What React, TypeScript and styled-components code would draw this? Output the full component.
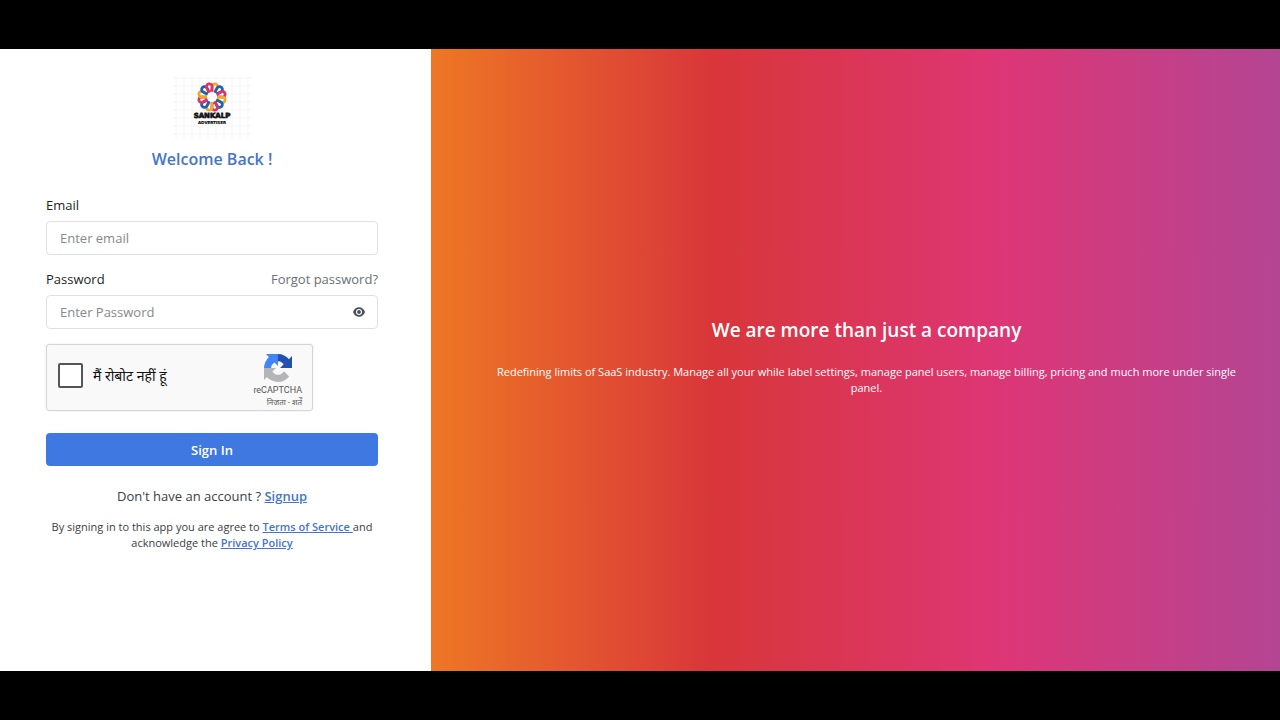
import React from "react";
import styled, { createGlobalStyle } from "styled-components";

const GlobalStyle = createGlobalStyle`
  *, *::before, *::after { box-sizing: border-box; }
  body { margin: 0; background: #000; }
  body, input, button { font-family: "Open Sans", "Noto Sans", sans-serif; }
`;

const Page = styled.div`
  min-height: 100vh;
  padding: 49px 0;
  display: flex;
  background: #000;
`;

const Split = styled.main`
  flex: 1;
  display: grid;
  grid-template-columns: 431fr 849fr;
`;

const FormPanel = styled.section`
  background: #fff;
  padding: 28px 53px 28px 46px;
`;

const Form = styled.form`
  display: flex;
  flex-direction: column;
`;

const Logo = styled.svg`
  display: block;
  align-self: center;
`;

const Heading = styled.h1`
  margin: 8px 0 24px;
  font-size: 16px;
  line-height: 24px;
  font-weight: 600;
  text-align: center;
  color: #4474cc;
`;

const LabelRow = styled.div`
  display: flex;
  justify-content: space-between;
  font-size: 13px;
  line-height: 20px;
  margin-bottom: 6px;
`;

const Label = styled.label`
  color: #1c1f24;
  font-weight: 500;
`;

const MutedLink = styled.a`
  color: #6c6f74;
  text-decoration: none;
`;

const Field = styled.div`
  display: flex;
  align-items: center;
  height: 34px;
  margin-bottom: 14px;
  padding-right: 12px;
  border: 1px solid #dfe1e4;
  border-radius: 4px;
`;

const Input = styled.input`
  flex: 1;
  min-width: 0;
  height: 100%;
  padding: 0 13px;
  border: 0;
  outline: 0;
  background: transparent;
  font-size: 13px;
  color: #212529;
  &::placeholder { color: #85888e; opacity: 1; }
`;

const IconButton = styled.button`
  display: flex;
  padding: 0;
  border: 0;
  background: none;
  color: #495057;
`;

const Captcha = styled.div`
  display: flex;
  align-items: flex-start;
  justify-content: space-between;
  width: 267px;
  height: 67px;
  margin: 1px 0 22px;
  padding: 9px 10px 0 11px;
  background: #f9f9f9;
  border: 1px solid #d6d6d6;
  border-radius: 3px;
  box-shadow: 0 0 3px rgba(0, 0, 0, 0.08);
`;

const CaptchaLabel = styled.label`
  display: flex;
  align-items: center;
  gap: 10px;
  height: 43px;
  font-size: 14px;
  color: #111;
`;

const Checkbox = styled.input`
  appearance: none;
  width: 25px;
  height: 25px;
  margin: 0;
  border: 2px solid #555;
  border-radius: 2px;
  background: #fff;
`;

const CaptchaBrand = styled.div`
  display: flex;
  flex-direction: column;
  align-items: center;
  gap: 2px;
  font-family: Roboto, "Noto Sans", sans-serif;
  font-size: 9px;
  line-height: 12px;
  color: #555;
`;

const CaptchaTerms = styled.div`
  align-self: flex-end;
  font-size: 8px;
  line-height: 9px;
  a { color: inherit; text-decoration: none; }
`;

const SubmitButton = styled.button`
  height: 33px;
  padding: 0;
  border: 0;
  border-radius: 4px;
  background: #3f78e0;
  color: #fff;
  font-size: 13px;
  font-weight: 600;
`;

const Note = styled.p<{ $small?: boolean }>`
  margin: ${(p) => (p.$small ? "13px 0 0" : "20px 0 0")};
  font-size: ${(p) => (p.$small ? "11px" : "13px")};
  line-height: ${(p) => (p.$small ? "16px" : "20px")};
  text-align: center;
  color: #3a3d42;
`;

const TextLink = styled.a`
  color: #4474cc;
  font-weight: 600;
  text-decoration: underline;
`;

const PromoPanel = styled.section`
  display: flex;
  flex-direction: column;
  justify-content: center;
  padding: 0 36px 8px 58px;
  text-align: center;
  color: #fff;
  background: linear-gradient(to right, #ee7724, #d8363a, #dd3675, #b44593);
`;

const PromoTitle = styled.h2`
  margin: 0 0 21px;
  font-size: 19px;
  line-height: 26px;
  font-weight: 600;
`;

const PromoText = styled.p`
  margin: 0;
  font-size: 11px;
  line-height: 16px;
  font-weight: 500;
`;

const petalColors = ["#f4a62a", "#1d62b5", "#e0316f"];

function BrandLogo() {
  return (
    <Logo width="79" height="62" viewBox="0 0 79 62" role="img" aria-label="Sankalp Advertiser">
      <path
        d={
          Array.from({ length: 10 }, (_, i) => `M${i * 8 + 3} 0V62`).join("") +
          Array.from({ length: 8 }, (_, i) => `M0 ${i * 8 + 1}H79`).join("")
        }
        stroke="#f5f5f7"
        fill="none"
      />
      {Array.from({ length: 12 }, (_, i) => (
        <g key={i} transform={`translate(39 20) rotate(${i * 30 + 15})`}>
          <path
            d="M-1 -5L-2.700 -9.700A2.900 2.900 0 1 1 2.800 -9.700L1 -5.500"
            fill="none"
            stroke={petalColors[i % 3]}
            strokeWidth="2.800"
          />
        </g>
      ))}
      <text x="39" y="41" textAnchor="middle" fontFamily="DejaVu Sans" fontWeight="700" fontSize="7" fill="#111" stroke="#111" strokeWidth="0.700">
        SANKALP
      </text>
      <text x="39" y="47" textAnchor="middle" fontFamily="DejaVu Sans" fontWeight="700" fontSize="4" fill="#111" stroke="#111" strokeWidth="0.200">
        ADVERTISER
      </text>
    </Logo>
  );
}

function CaptchaIcon() {
  return (
    <svg width="28" height="28" viewBox="0 0 64 64" aria-hidden="true">
      <path fill="#2450b4" d="M64 31.955l-.033-1.37V4.687l-7.16 7.16C50.948 4.674 42.033.093 32.05.093c-10.4 0-19.622 4.96-25.458 12.64l11.736 11.86a15.55 15.55 0 0 1 4.754-5.334c2.05-1.6 4.952-2.906 8.968-2.906.485 0 .86.057 1.135.163 4.976.393 9.288 3.14 11.828 7.124l-8.307 8.307L64 31.953" />
      <path fill="#4285f4" d="M31.862.094l-1.37.033H4.594l7.16 7.16C4.58 13.147 0 22.06 0 32.046c0 10.4 4.96 19.622 12.64 25.458L24.5 45.768a15.55 15.55 0 0 1-5.334-4.754c-1.6-2.05-2.906-4.952-2.906-8.968 0-.485.057-.86.163-1.135.393-4.976 3.14-9.288 7.124-11.828l8.307 8.307L31.86.095" />
      <path fill="#b5b5b7" d="M.001 32.045l.033 1.37v25.898l7.16-7.16c5.86 7.173 14.774 11.754 24.76 11.754 10.4 0 19.622-4.96 25.458-12.64l-11.736-11.86a15.55 15.55 0 0 1-4.754 5.334c-2.05 1.6-4.952 2.906-8.968 2.906-.485 0-.86-.057-1.135-.163-4.976-.393-9.288-3.14-11.828-7.124l8.307-8.307c-10.522.04-22.4.066-27.295-.005" />
    </svg>
  );
}

function EyeIcon() {
  return (
    <svg width="12" height="12" viewBox="0 0 24 24" fill="currentColor" aria-hidden="true">
      <path fillRule="evenodd" d="M12 2.500C6.500 2.500 2 6 0 12c2 6 6.500 9.500 12 9.500S22 18 24 12C22 6 17.500 2.500 12 2.500zM12 18a6 6 0 1 1 0-12 6 6 0 0 1 0 12z" />
      <circle cx="12" cy="12" r="3.800" />
    </svg>
  );
}

export default function App() {
  return (
    <Page>
      <GlobalStyle />
      <Split>
        <FormPanel>
          <Form onSubmit={(e: React.FormEvent) => e.preventDefault()}>
            <BrandLogo />
            <Heading>Welcome Back !</Heading>
            <LabelRow>
              <Label htmlFor="email">Email</Label>
            </LabelRow>
            <Field>
              <Input id="email" type="email" placeholder="Enter email" />
            </Field>
            <LabelRow>
              <Label htmlFor="password">Password</Label>
              <MutedLink href="#forgot">Forgot password?</MutedLink>
            </LabelRow>
            <Field>
              <Input id="password" type="password" placeholder="Enter Password" />
              <IconButton type="button" aria-label="Show password">
                <EyeIcon />
              </IconButton>
            </Field>
            <Captcha>
              <CaptchaLabel>
                <Checkbox type="checkbox" />
                मैं रोबोट नहीं हूं
              </CaptchaLabel>
              <CaptchaBrand>
                <CaptchaIcon />
                <span>reCAPTCHA</span>
                <CaptchaTerms>
                  <a href="#privacy">निजता</a> - <a href="#terms">शर्तें</a>
                </CaptchaTerms>
              </CaptchaBrand>
            </Captcha>
            <SubmitButton type="submit">Sign In</SubmitButton>
            <Note>
              Don't have an account ? <TextLink href="#signup">Signup</TextLink>
            </Note>
            <Note $small>
              By signing in to this app you are agree to <TextLink href="#tos">Terms of Service </TextLink>and
              acknowledge the <TextLink href="#policy">Privacy Policy</TextLink>
            </Note>
          </Form>
        </FormPanel>
        <PromoPanel>
          <PromoTitle>We are more than just a company</PromoTitle>
          <PromoText>
            Redefining limits of SaaS industry. Manage all your while label settings, manage panel users, manage
            billing, pricing and much more under single panel.
          </PromoText>
        </PromoPanel>
      </Split>
    </Page>
  );
}
